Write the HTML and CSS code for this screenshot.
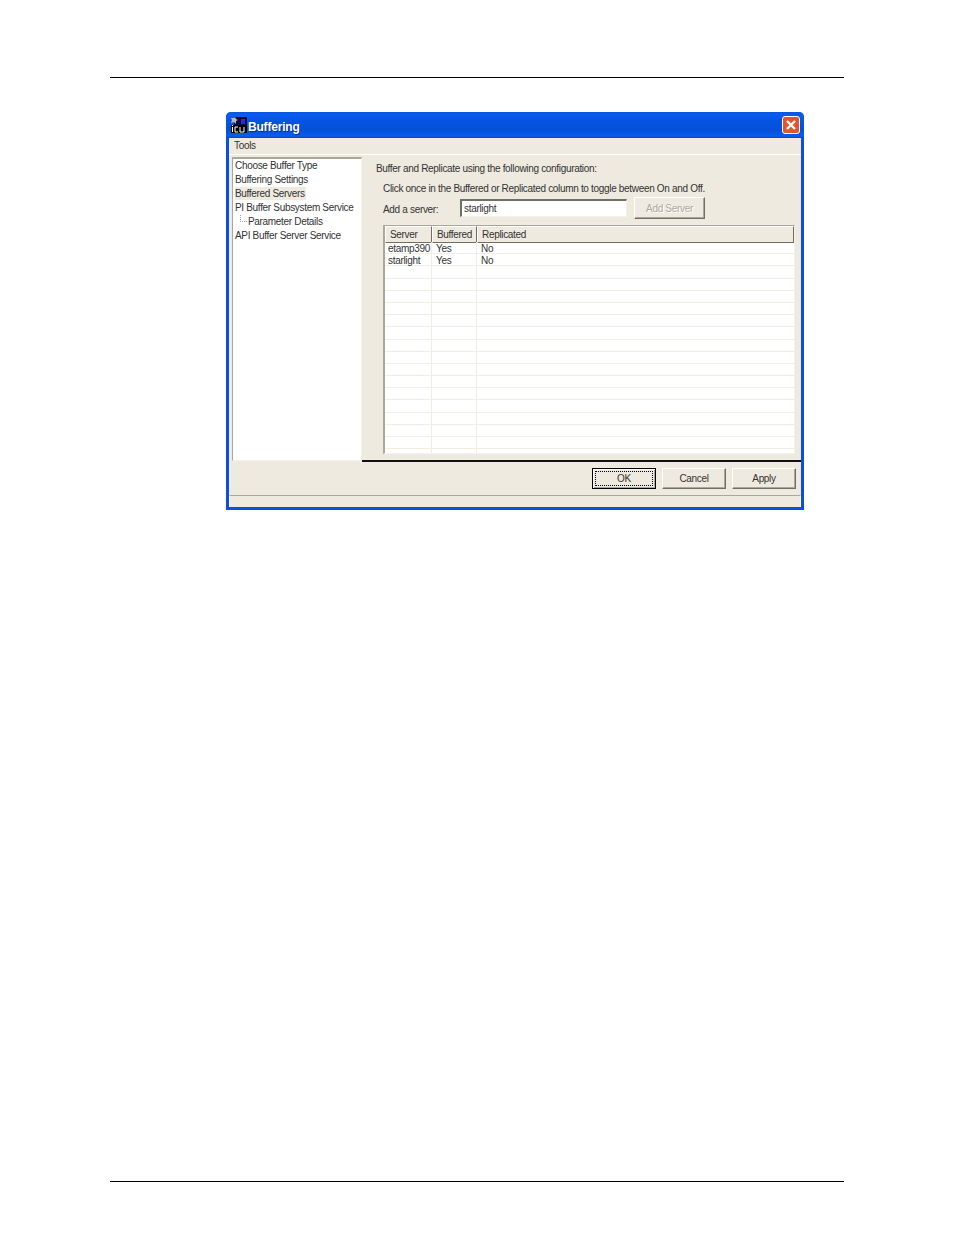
FILE: index.html
```html
<!DOCTYPE html>
<html lang="en">
<head>
    <meta charset="UTF-8">
    <title>Buffering</title>
    <link rel="stylesheet" href="styles.css">
</head>
<body>
    <div class="page">
        <div class="page-rule top-rule"></div>

        <!-- Dialog window -->
        <div class="window">
            <div class="titlebar">
                <svg class="app-icon" width="16" height="16" viewBox="0 0 16 16">
                    <rect x="3" y="0" width="13" height="16" fill="#0a0a3c"/>
                    <rect x="10" y="2" width="4" height="5" fill="#2a2ad0"/>
                    <path d="M4 0l1 2 2 1-2 1 0 3-2-2-3 1 1-3-1-2 3 0z" fill="#b8b8b8"/>
                    <rect x="0" y="8" width="16" height="8" fill="#000"/>
                    <rect x="1" y="10" width="1" height="5" fill="#fff"/>
                    <rect x="1" y="8" width="1" height="1" fill="#fff"/>
                    <path d="M7 10H4v5h3M9 10v5h4v-5" fill="none" stroke="#fff"/>
                </svg>
                <span class="title-text">Buffering</span>
                <div class="close-btn">
                    <svg width="16" height="16" viewBox="0 0 16 16">
                        <path d="M4 4l8 8M12 4l-8 8" stroke="#fff" stroke-width="2.4"/>
                    </svg>
                </div>
            </div>

            <div class="menubar"><span>Tools</span></div>

            <div class="content">
                <!-- Tree on the left -->
                <ul class="tree">
                    <li>Choose Buffer Type</li>
                    <li>Buffering Settings</li>
                    <li><span class="selected">Buffered Servers</span></li>
                    <li>PI Buffer Subsystem Service</li>
                    <li class="child"><span class="branch"></span>Parameter Details</li>
                    <li>API Buffer Server Service</li>
                </ul>

                <!-- Settings panel -->
                <div class="panel">
                    <p class="heading">Buffer and Replicate using the following configuration:</p>
                    <p class="hint">Click once in the Buffered or Replicated column to toggle between On and Off.</p>
                    <div class="add-row">
                        <label>Add a server:</label>
                        <div class="text-input">starlight</div>
                        <button class="btn add-btn">Add Server</button>
                    </div>

                    <div class="grid">
                        <div class="grid-row grid-head">
                            <div>Server</div><div>Buffered</div><div>Replicated</div>
                        </div>
                        <div class="grid-row"><div>etamp390</div><div>Yes</div><div>No</div></div>
                        <div class="grid-row"><div>starlight</div><div>Yes</div><div>No</div></div>
                        <div class="grid-row"><div></div><div></div><div></div></div>
                        <div class="grid-row"><div></div><div></div><div></div></div>
                        <div class="grid-row"><div></div><div></div><div></div></div>
                        <div class="grid-row"><div></div><div></div><div></div></div>
                        <div class="grid-row"><div></div><div></div><div></div></div>
                        <div class="grid-row"><div></div><div></div><div></div></div>
                        <div class="grid-row"><div></div><div></div><div></div></div>
                        <div class="grid-row"><div></div><div></div><div></div></div>
                        <div class="grid-row"><div></div><div></div><div></div></div>
                        <div class="grid-row"><div></div><div></div><div></div></div>
                        <div class="grid-row"><div></div><div></div><div></div></div>
                        <div class="grid-row"><div></div><div></div><div></div></div>
                        <div class="grid-row"><div></div><div></div><div></div></div>
                        <div class="grid-row"><div></div><div></div><div></div></div>
                        <div class="grid-row"><div></div><div></div><div></div></div>
                        <div class="grid-row short"><div></div><div></div><div></div></div>
                    </div>
                </div>
            </div>

            <div class="actions">
                <button class="btn default-btn"><span>OK</span></button>
                <button class="btn">Cancel</button>
                <button class="btn">Apply</button>
            </div>

            <div class="statusbar"></div>
        </div>

        <div class="page-rule bottom-rule"></div>
    </div>
</body>
</html>
```

FILE: styles.css
```css
/* Page */
html, body {
    margin: 0;
    padding: 0;
    background: #fff;
}

.page {
    width: 954px;
    height: 1235px;
    padding: 77px 110px 0;
    box-sizing: border-box;
    overflow: hidden;
}

.page-rule {
    height: 1px;
    background: #000;
}

.bottom-rule {
    margin-top: 671px;
}

/* Window frame */
.window {
    width: 578px;
    height: 398px;
    margin: 34px 0 0 116px;
    box-sizing: border-box;
    background: #eeeadf;
    border: solid #0a4fe0;
    border-width: 0 3px 3px 3px;
    border-radius: 5px 5px 0 0;
    font-family: "Liberation Sans", Arial, sans-serif;
    font-size: 10px;
    letter-spacing: -0.32px;
    color: #333;
    display: flex;
    flex-direction: column;
}

/* Title bar */
.titlebar {
    height: 26px;
    margin: 0 -3px;
    padding: 0 4px 0 5px;
    flex-shrink: 0;
    display: flex;
    align-items: center;
    border-radius: 5px 5px 0 0;
    background: linear-gradient(to bottom, #0a55e0 0, #0a5cf0 3px, #0654e4 8px, #0450d8 18px, #0a5cf0 24px, #0644c8 26px);
}

.app-icon {
    flex-shrink: 0;
}

.title-text {
    margin: 3px 0 0 1px;
    font-size: 12px;
    letter-spacing: -0.2px;
    font-weight: bold;
    color: #fff;
    text-shadow: 1px 1px 0 #0a2c90;
}

.close-btn {
    margin-left: auto;
    width: 16px;
    height: 16px;
    border: 1px solid #fff;
    border-radius: 3px;
    background: #e2562f;
    display: flex;
}

/* Menu */
.menubar {
    height: 16px;
    flex-shrink: 0;
    padding: 0 0 0 5px;
    line-height: 15px;
    border-bottom: 1px solid #fff;
}

/* Main area */
.content {
    display: flex;
    height: 307px;
    flex-shrink: 0;
}

.tree {
    list-style: none;
    width: 130px;
    height: 304px;
    margin: 2px 0 0 3px;
    padding: 0 0 0 2px;
    box-sizing: border-box;
    background: #fff;
    border: 1px solid #f4f2e8;
    border-top: 2px solid #aca899;
    border-left: 1px solid #aca899;
}

.tree li {
    height: 14px;
    line-height: 14px;
    white-space: nowrap;
}

.tree .selected {
    background: #eeeadf;
    padding: 1px 1px 1px 0;
}

.tree .child {
    padding-left: 13px;
    position: relative;
}

.branch {
    position: absolute;
    left: 5px;
    top: 0;
    width: 6px;
    height: 6px;
    border-left: 1px dotted #999;
    border-bottom: 1px dotted #999;
}

.panel {
    flex: 1;
    padding: 0 0 0 14px;
    position: relative;
    border-bottom: 2px solid #111;
}

.heading {
    margin: 8px 0 0;
    line-height: 12px;
}

.hint {
    margin: 8px 0 0 7px;
    line-height: 12px;
}

.add-row {
    display: flex;
    align-items: center;
    margin: 2px 0 0 7px;
    height: 22px;
}

.add-row label {
    width: 77px;
    padding-top: 2px;
}

.text-input {
    width: 167px;
    height: 18px;
    box-sizing: border-box;
    padding-left: 2px;
    line-height: 15px;
    background: #fff;
    border: 1px solid #f4f2e8;
    border-top: 2px solid #716f64;
    border-left: 2px solid #716f64;
}

/* Buttons */
.btn {
    width: 64px;
    height: 21px;
    padding: 0;
    box-sizing: border-box;
    font-family: "Liberation Sans", Arial, sans-serif;
    font-size: 10px;
    letter-spacing: -0.32px;
    color: #333;
    background: #eeeadf;
    border: 1px solid;
    border-color: #fff #716f64 #716f64 #fff;
    box-shadow: inset -1px -1px 0 #aca899;
}

.add-btn {
    width: 71px;
    margin-left: 7px;
    height: 22px;
    color: #aca899;
    text-shadow: 1px 1px 0 #fff;
}

.default-btn {
    border: 1px solid #000;
    box-shadow: inset 1px 1px 0 #fff, inset -1px -1px 0 #aca899;
    padding: 2px;
}

.default-btn span {
    display: block;
    height: 100%;
    line-height: 13px;
    border: 1px dotted #000;
    box-sizing: border-box;
}

/* Server grid */
.grid {
    margin: 6px 0 0 7px;
    width: 412px;
    height: 229px;
    box-sizing: border-box;
    overflow: hidden;
    background: #fff;
    border: 1px solid #f4f2e8;
    border-top: 1px solid #aca899;
    border-left: 2px solid #aca899;
}

.grid-row {
    display: grid;
    grid-template-columns: 47px 45px 1fr;
    height: 12.2px;
    box-sizing: border-box;
    line-height: 13px;
    border-bottom: 1px solid #f0eee2;
}

.grid-row > div {
    padding-left: 3px;
    border-right: 1px solid #f0eee2;
    white-space: nowrap;
}

.grid-row > div:nth-child(2) {
    padding-left: 4px;
}

.grid-row > div:last-child {
    padding-left: 4px;
    border-right: none;
}

.grid-head {
    height: 16px;
    line-height: 15px;
    border-bottom: none;
}

.grid-head > div,
.grid-head > div:nth-child(2),
.grid-head > div:last-child {
    padding-left: 4px;
    background: #eeeadf;
    border: 1px solid;
    border-color: #fff #716f64 #716f64 #fff;
}

.short {
    height: 6px;
    border-bottom: none;
}

/* Bottom buttons */
.actions {
    height: 33px;
    flex-shrink: 0;
    display: flex;
    justify-content: flex-end;
    align-items: flex-start;
    gap: 6px;
    padding: 6px 5px 0 0;
    box-sizing: border-box;
}

.statusbar {
    flex: 1;
    border-top: 1px solid #aca899;
    border-right: 1px solid #fff;
    border-left: 1px solid #fff;
}
```
